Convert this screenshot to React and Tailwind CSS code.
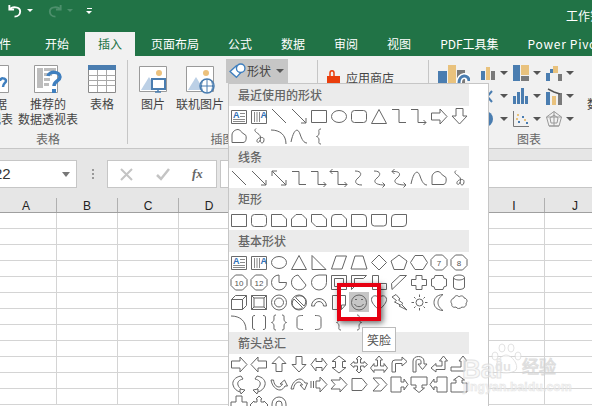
import React from "react";

const cjk = "font-['Noto_Sans_CJK_SC','Noto_Sans',sans-serif]";

// shape gallery, every path is drawn in a 20x20 cell
const P = {
  line: "M3 3L17 17",
  arrow: "M3 3L17 17M17 12V17H12",
  darrow: "M3 3L17 17M3 8V3H8M17 12V17H12",
  elbow: "M3 3.5H10V16.5H17",
  elbowA: "M2 3.5H9V16.5H17M14.5 14L17 16.5L14.5 19",
  elbowD: "M3.5 1L1 3.5L3.5 6M1 3.5H9V16.5H18M15.5 14L18 16.5L15.5 19",
  conn: "M6 3C13 3 13 7 9 10C5 13 6 17 13 17",
  connA: "M5 3C12 3 12 7 8 10C4 13 5 17 16 17M13.5 14.5L16 17L13.5 19.5",
  connD: "M5.5 1L3 3.5L5.5 6M3 3.5C12 3 12 7 8 10C4 13 5 17 17 17M14.5 14.5L17 17L14.5 19.5",
  curve: "M2 16C5 2 9 2 11 8C13 14 15 17 18 17",
  free: "M3 16.5V9C3 6 6 3.5 9 3.5C12 3.5 12 7 15 8L17 9.5C17.5 13 17 16.5 14 16.5Z",
  scribble: "M7 2.5C3 6 11 7 11.5 11C12 15 9 18 8 15.5C7 12 15 9.5 15 13.5C15 18 11.5 18 11 14",
  arc: "M2 4C11 4 17 9 17 18",
  rect: "M2.5 4.5H17.5V16.5H2.5Z",
  ellipse: "M2.5 10.5A7.5 6 0 1 0 17.5 10.5A7.5 6 0 1 0 2.5 10.5Z",
  round: "M5.5 4.5H14.5Q17.5 4.5 17.5 7.5V13.5Q17.5 16.5 14.5 16.5H5.5Q2.5 16.5 2.5 13.5V7.5Q2.5 4.5 5.5 4.5Z",
  tri: "M10 3.5L17.5 17.5H2.5Z",
  rarrow: "M2.5 7H11V3L18 10.5L11 18V14H2.5Z",
  darrowS: "M7 2.5H14V10H18L10.5 18L3 10H7Z",
  lbrace1: "M12 3C9 3 10 5 10 7C10 9 9 10 7.5 10.5C9 11 10 12 10 14C10 16 9 18 12 18",
  snip1: "M2.5 4.5H13L17.5 9V16.5H2.5Z",
  snip2: "M2.5 16.5V9L7 4.5H13L17.5 9V16.5Z",
  snipD: "M2.5 4.5H13L17.5 9V16.5H7L2.5 12Z",
  snipR: "M6 4.5H13L17.5 9V16.5H2.5V8Q2.5 4.5 6 4.5Z",
  round1: "M2.5 4.5H14Q17.5 4.5 17.5 8V16.5H2.5Z",
  round2: "M2.5 4.5H17.5V13Q17.5 16 14.5 16H5.5Q2.5 16 2.5 13Z",
  roundD: "M6 4.5H17.5V13Q17.5 16.5 14 16.5H2.5V8Q2.5 4.5 6 4.5Z",
  rtri: "M3 3.5L17 17.5H3Z",
  para: "M7 4H17.5L13 17H2.5Z",
  trap: "M6 4H14L18 17H2Z",
  diamond: "M10 3L17.5 10.5L10 18L2.5 10.5Z",
  penta: "M10 3L18 9L15 17.5H5L2 9Z",
  hexa: "M6 3.5H14L18.5 10.5L14 17.5H6L1.5 10.5Z",
  octa: "M6.5 3H13.5L18 7.5V13.5L13.5 18H6.5L2 13.5V7.5Z",
  pie: "M10 3A7.5 7.5 0 1 0 17.5 10.5H10Z",
  chord: "M9 3L17 13A7.5 7.5 0 1 1 9 3Z",
  tear: "M17.5 3V10.5A7.5 7.5 0 1 1 10 3Z",
  frame: "M2.5 3.5H17.5V17.5H2.5ZM5.5 6.5H14.5V14.5H5.5Z",
  half: "M2.5 3.5H17.5L14.5 6.5H5.5V14.5L2.5 17.5Z",
  lshape: "M3.5 3.5H9.5V11.5H17.5V17.5H3.5Z",
  stripe: "M2.5 11.5L11 3.5H17.5L3 17.5Z",
  cross: "M7 3.5H13V7.5H17.5V13.5H13V17.5H7V13.5H2.5V7.5H7Z",
  plaque: "M6 3.5H14A3.5 3.5 0 0 0 17.5 7V14A3.5 3.5 0 0 0 14 17.5H6A3.5 3.5 0 0 0 2.5 14V7A3.5 3.5 0 0 0 6 3.5Z",
  can: "M4.5 5.5A5.5 2.5 0 0 1 15.5 5.5V15A5.5 2.5 0 0 1 4.5 15ZM4.5 5.5A5.5 2.5 0 0 0 15.5 5.5",
  cube: "M2.5 7.5H13.5V17.5H2.5ZM2.5 7.5L6.5 3.5H17.5L13.5 7.5M17.5 3.5V13.5L13.5 17.5",
  bevel: "M2.5 3.5H17.5V17.5H2.5ZM5 6H15V15H5ZM2.5 3.5L5 6M17.5 3.5L15 6M2.5 17.5L5 15M17.5 17.5L15 15",
  donut: "M2.5 10.5A7.5 7.5 0 1 0 17.5 10.5A7.5 7.5 0 1 0 2.5 10.5ZM5.5 10.5A4.5 4.5 0 1 0 14.5 10.5A4.5 4.5 0 1 0 5.5 10.5Z",
  noSym: "M2.5 10.5A7.5 7.5 0 1 0 17.5 10.5A7.5 7.5 0 1 0 2.5 10.5ZM6.5 5.5L15 14M5 7L13.5 15.5M5 7A5 5 0 0 0 13.5 15.5M6.5 5.5A5 5 0 0 1 15 14",
  block: "M2.5 14A7.5 7.5 0 0 1 17.5 14H14.5A4.5 4.5 0 0 0 5.5 14Z",
  fold: "M3.5 3.5H16.5V13L12.5 17.5H3.5ZM16.5 13H12.5V17.5",
  smile: "M2.5 10.5A7.5 7.5 0 1 0 17.5 10.5A7.5 7.5 0 1 0 2.5 10.5ZM6 7.5H8M12 7.5H14M5.5 12C7 15.5 13 15.5 14.5 12",
  heart: "M10 18C3 12 2.5 9 2.5 7.5C2.5 3 8.5 2.5 10 6.5C11.5 2.5 17.5 3 17.5 7.5C17.5 9 17 12 10 18Z",
  bolt: "M7 2.5L11 7L9.5 8L14 11.5L12.5 12.5L18 18L10 14L11.5 13L5.5 10L7.5 8.5L3 5Z",
  sun: "M7 10.5A3.5 3.5 0 1 0 14 10.5A3.5 3.5 0 1 0 7 10.5ZM10.5 2.5V5M10.5 16V18.5M2.5 10.5H5M16 10.5H18.5M5 5L6.5 6.5M14.5 14.5L16 16M5 16L6.5 14.5M14.5 6.5L16 5",
  moon: "M14 2.5C7 3 5 7 5 10.5C5 14 7 18 14 18.5C10 15.5 9 13 9 10.5C9 8 10 5.5 14 2.5Z",
  cloud: "M5 6C6 3 9 3 10 5C12 3 15 4 15 6C18 6 19 10 17 11C18 14 15 16 13 15C11 17 8 17 7 15C4 16 2 14 3 12C1 10 2 7 5 6Z",
  dbracket: "M6 3.5C4 3.5 3.5 4 3.5 6V15C3.5 17 4 17.5 6 17.5M14 3.5C16 3.5 16.5 4 16.5 6V15C16.5 17 16 17.5 14 17.5",
  dbrace: "M7 3C4.5 3 5 4 5 7C5 9 4 10 2.5 10.5C4 11 5 12 5 14C5 17 4.5 18 7 18M13 3C15.5 3 15 4 15 7C15 9 16 10 17.5 10.5C16 11 15 12 15 14C15 17 15.5 18 13 18",
  lbracket: "M14 3.5C10 3.5 8 4 8 6.5V14.5C8 17 10 17.5 14 17.5",
  rbracket: "M6 3.5C10 3.5 12 4 12 6.5V14.5C12 17 10 17.5 6 17.5",
  rbrace: "M8 3C11 3 10 5 10 7C10 9 11 10 12.5 10.5C11 11 10 12 10 14C10 16 11 18 8 18",
  larrow: "M17.5 7H9V3L2 10.5L9 18V14H17.5Z",
  uarrow: "M7 17.5V9.5H3L10 2.5L17 9.5H13V17.5Z",
  darrowB: "M7 2.5V10.5H3L10 18L17 10.5H13V2.5Z",
  lr: "M2 10.5L7 4V7.5H13V4L18 10.5L13 17V13.5H7V17Z",
  ud: "M10 2L17 7.5H13.5V13.5H17L10 19L3 13.5H6.5V7.5H3Z",
  quad: "M10 2L13 5H11.5V9H15V7.5L18.5 10.5L15 13.5V12H11.5V16H13L10 19L7 16H8.5V12H5V13.5L1.5 10.5L5 7.5V9H8.5V5H7Z",
  lru: "M10 2L13.5 6H11.5V12H15V9.5L18.5 14L15 18.5V16H5V18.5L1.5 14L5 9.5V12H8.5V6H6.5Z",
  bent: "M3 18V9Q3 6 6 6H13V3L18 7.5L13 12V9.5H6.5V18Z",
  uturn: "M4 18V7C4 1 15 1 15 7V10H18L13.5 15.5L9 10H12V7C12 5 7 5 7 7V18Z",
  leftup: "M2 14L7 9.5V12H13V7H10.5L14.5 2L18.5 7H16V15.5H7V18Z",
  bentup: "M2 13H12V7H10L14 2L18 7H16V17H2Z",
  curveR: "M12 2C6 3 3 7 4 11C5 15 8 17 11 18V15L16 16L12 20L11.5 18M12 2L14 5C10 6 8 8 9 11C9.5 13 11 14 12 15",
  curveL: "M8 2C14 3 17 7 16 11C15 15 12 17 9 18V15L4 16L8 20L8.5 18M8 2L6 5C10 6 12 8 11 11C10.5 13 9 14 8 15",
  curveU: "M2 6C3 12 7 16 11 16C13 16 15 14 16 12H18.5L15.5 6L11 10H13.5C12.5 12 11 13 10 13C7 13 5 10 4.5 6Z",
  curveD: "M2 15C3 9 7 5 11 5C13 5 15 7 16 9H18.5L15.5 16L11 11H13.5C12.5 9 11 8 10 8C7 8 5 11 4.5 15Z",
  striped: "M2 7V14M4.5 7V14M7 7H11V3L18 10.5L11 18V14H7Z",
  notched: "M2 6H11V3L18 10.5L11 18V15H2L6 10.5Z",
  home: "M3 4.5H13L18 10.5L13 16.5H3Z",
  chevron: "M4 4H12L18 10.5L12 17H4L10 10.5Z",
  rcall: "M2 3H12V8H15V5L19 10.5L15 16V13H12V18H2Z",
  dcall: "M2 3H18V11H13V14H15.5L10 18.5L4.5 14H7V11H2Z",
  lcall: "M18 3H8V8H5V5L1 10.5L5 16V13H8V18H18Z",
  ucall: "M2 18V9H7V6H4.5L10 2L15.5 6H13V9H18V18Z",
  lrcall: "M7 2H13V8H18V18H2V8H7Z",
  qcall: "M10 2L13 5H12V8H15V7L19 11L15 15V14H5V15L1 11L5 7V8H8V5H7Z",
  circ: "M3 18V10A7 7 0 0 1 17 10V18H13V10A3 3 0 0 0 7 10V18Z",
};

const TextBox = ({ vertical }) => (
  <svg width="20" height="20" viewBox="0 0 20 20" fill="none">
    <path d="M2.5 4.5H17.5V17.5H2.5Z" stroke="#6b6b6b" />
    {vertical ? (
      <path d="M5.5 6V16M8 6V16M10.5 6V16" stroke="#8a8a8a" />
    ) : (
      <path d="M11 7.5H16M11 10.5H16M4 13.5H16M4 15.5H16" stroke="#8a8a8a" />
    )}
    <text x={vertical ? 11.5 : 4} y="12" fontSize="9" fontWeight="700" fill="#2f6fb5" fontFamily="Liberation Sans">A</text>
  </svg>
);

const Shape = ({ d, label }) => {
  if (d === "text") return <TextBox />;
  if (d === "vtext") return <TextBox vertical />;
  return (
    <svg width="20" height="20" viewBox="0 0 20 20" fill="none" stroke="#666666" strokeWidth="1">
      <path d={P[d]} />
      {label && (
        <text x="10" y="13.5" textAnchor="middle" fontSize="8" stroke="none" fill="#555" fontFamily="Liberation Sans">{label}</text>
      )}
    </svg>
  );
};

const sections = [
  { title: "最近使用的形状", items: ["text", "vtext", "line", "arrow", "rect", "ellipse", "round", "tri", "elbow", "elbowA", "rarrow", "darrowS", "free", "scribble", "arc", "curve", "lbrace1"] },
  { title: "线条", items: ["line", "arrow", "darrow", "elbow", "elbowA", "elbowD", "conn", "connA", "connD", "curve", "free", "scribble"] },
  { title: "矩形", items: ["rect", "round", "snip1", "snip2", "snipD", "snipR", "round1", "round2", "roundD"] },
  { title: "基本形状", items: ["text", "vtext", "ellipse", "tri", "rtri", "para", "trap", "diamond", "penta", "hexa", "octa:7", "octa:8", "octa:10", "octa:12", "pie", "chord", "tear", "frame", "half", "lshape", "stripe", "cross", "plaque", "can", "cube", "bevel", "donut", "noSym", "block", "fold", "smile", "heart", "bolt", "sun", "moon", "cloud", "arc", "dbracket", "dbrace", "lbracket", "rbracket", "lbrace1", "rbrace"] },
  { title: "箭头总汇", items: ["rarrow", "larrow", "uarrow", "darrowB", "lr", "ud", "quad", "lru", "bent", "uturn", "leftup", "bentup", "curveR", "curveL", "curveU", "curveD", "striped", "notched", "home", "chevron", "rcall", "dcall", "lcall", "ucall", "lrcall", "qcall", "circ"] },
];

const tabs = ["开始", "插入", "页面布局", "公式", "数据", "审阅", "视图", "PDF工具集", "Power Pivot"];
const columns = ["A", "B", "C", "D", "E", "F", "G", "H", "I", "J"];
const rows = Array.from({ length: 12 });

const Caret = () => <span className="h-0 w-0 shrink-0 border-x-[4px] border-t-[4px] border-x-transparent border-t-[#555]" />;

const Pic = ({ children }) => (
  <svg width="30" height="30" viewBox="0 0 30 30" fill="none">
    <path d="M1.5 2.5H28.5V27.5H1.5Z" fill="#fff" stroke="#9a9a9a" />
    <circle cx="21" cy="9" r="3" fill="#ecc17c" />
    <path d="M3 26L11 13L19 26Z" fill="#bcd0e6" />
    {children}
  </svg>
);

const BigButton = ({ icon, lines, className }) => (
  <div className={`flex shrink-0 flex-col items-center pt-[7px] ${className}`}>
    <div className="flex h-[32px] items-center">{icon}</div>
    <div className="mt-[1px] text-center text-[12px] leading-[15px] whitespace-nowrap text-[#444]">
      {lines.map((l) => <div key={l}>{l}</div>)}
    </div>
  </div>
);

const GroupLabel = ({ children }) => (
  <div className="absolute inset-x-0 bottom-[1px] text-center text-[12px] leading-[16px] text-[#666]">{children}</div>
);

const B = "#4a7db0", Y = "#e9c27d", G = "#7a7a7a";
const chartIcons = [
  <svg key="a" width="16" height="16"><path d="M1 6h4v9H1z" fill={B} /><path d="M6 2h4v13H6z" fill={Y} /><path d="M11 6h4v9h-4z" fill={G} /></svg>,
  <svg key="b" width="16" height="16"><path d="M0 0h7v16H0z" fill={B} /><path d="M8 0h8v10H8z" fill={Y} /><path d="M8 11h8v5H8z" fill={G} /></svg>,
  <svg key="c" width="16" height="16"><path d="M0 8h4v8H0zM4 4h3v4H4z" fill={B} /><path d="M7 1h5v7H7z" fill={Y} /><path d="M12 9h4v7h-4z" fill={G} /></svg>,
  <svg key="d" width="16" height="16"><path d="M2 3l5 6 5-6M2 14l5-6 5 6" stroke={B} strokeWidth="2" fill="none" /></svg>,
  <svg key="e" width="16" height="16"><path d="M0 8h3v8H0zM4 4h3v12H4zM8 0h3v16H8zM12 8h3v8h-3z" fill={B} /></svg>,
  <svg key="f" width="16" height="18"><path d="M0 5h4v13H0z" fill={B} /><path d="M6 9h4v9H6z" fill={Y} /><path d="M12 6h4v12h-4z" fill={G} /><path d="M2 2l6 3 6 2" stroke="#555" strokeWidth="1.5" fill="none" /></svg>,
  <svg key="g" width="16" height="16"><circle cx="5" cy="8" r="8" fill={B} /></svg>,
  <svg key="h" width="16" height="16"><path d="M.5 0v15.5H16" stroke="#777" fill="none" /><path d="M4 3h2v2H4zM11 8h2v2h-2z" fill={Y} /><path d="M5 10h2v2H5zM9 5h2v2H9zM13 11h2v2h-2z" fill={B} /><path d="M3 7h2v2H3z" fill={Y} /></svg>,
  <svg key="i" width="16" height="16" fill="none" stroke="#999"><path d="M8 .5L15.5 6 13 15H3L.5 6Z" /><path d="M8 4L12 7 11 12H5L4 7Z" /><path d="M8 .5V15M.5 6L15.5 6M3 15L13 15" /></svg>,
];

const App = () => {
  return (
    <div className={`relative h-[406px] w-[592px] overflow-hidden bg-white ${cjk}`}>
      {/* title bar */}
      <div className="flex h-[32px] items-center overflow-hidden bg-[#217346] pl-[7px] text-white">
        <div className="flex h-[21px] shrink-0 items-center self-start">
          <svg className="shrink-0" width="16" height="16" viewBox="0 0 17 17" fill="none" stroke="#fff" strokeWidth="2">
            <path d="M2.5 2V7H7.5" />
            <path d="M3 7C5 3.5 14 3.5 14 9C14 12 11.5 14.5 8 14.5" />
          </svg>
          <span className="ml-[4px] h-0 w-0 border-x-[3px] border-t-[3px] border-x-transparent border-t-white" />
          <svg className="ml-[14px] shrink-0" width="16" height="16" viewBox="0 0 17 17" fill="none" stroke="#4d8f6c" strokeWidth="2">
            <path d="M14.5 2V7H9.5" />
            <path d="M14 7C12 3.5 3 3.5 3 9C3 12 5.5 14.5 9 14.5" />
          </svg>
          <span className="ml-[4px] h-0 w-0 border-x-[3px] border-t-[3px] border-x-transparent border-t-[#4d8f6c]" />
          <div className="ml-[13px] flex flex-col items-center gap-[2px]">
            <span className="h-[1px] w-[5px] bg-white" />
            <span className="h-0 w-0 border-x-[3px] border-t-[3px] border-x-transparent border-t-white" />
          </div>
        </div>
        <span className="ml-[474px] shrink-0 text-[12px] whitespace-nowrap">工作簿1 - Excel</span>
      </div>

      {/* tabs */}
      <div className="flex h-[24px] items-stretch overflow-hidden bg-[#217346] text-[12px] leading-[24px] whitespace-nowrap text-white">
        <div className="ml-[-13px] pr-[19.5px]">文件</div>
        {tabs.map((t) => (
          <div
            key={t}
            className={
              t === "插入"
                ? "mx-[1.5px] bg-[#f1f1f1] px-[13px] text-[#217346]"
                : t === "Power Pivot"
                  ? "px-[14.5px] tracking-[0.7px]"
                  : "px-[14.5px]"
            }
          >
            {t}
          </div>
        ))}
      </div>

      {/* ribbon */}
      <div className="flex h-[93px] overflow-hidden border-b border-[#c6c6c6] bg-[#f1f1f1]">
        <div className="relative ml-[-31px] flex w-[158px] shrink-0 pl-[8px]">
          <BigButton className="w-[36px]" lines={["数据", "透视表"]} icon={
            <svg width="28" height="28" fill="none"><path d="M.5.5h27v27H.5z" fill="#fff" stroke="#9a9a9a" /><path d="M19 16c0-4 6-3 6 0 0 2-3 2-3 6" stroke="#3f7fbf" strokeWidth="2.5" /></svg>
          } />
          <BigButton className="ml-[5px] w-[60px]" lines={["推荐的", "数据透视表"]} icon={
            <svg width="30" height="30" fill="none">
              <path d="M1.5 1.5H24.5V28.5H1.5Z" fill="#fff" stroke="#9a9a9a" />
              <path d="M4 4h6v20H4zM11 4h12v3H11zM11 9h8v3h-8zM11 14h6v3h-6zM11 19h5v3h-5z" fill="#bdbdbd" />
              <path d="M15 12c1-5 12-5 12 1 0 4-6 4-6 9" stroke="#3f7fbf" strokeWidth="3.5" />
              <path d="M19 25h4v4h-4z" fill="#3f7fbf" />
            </svg>
          } />
          <BigButton className="ml-[10px] w-[28px]" lines={["表格"]} icon={
            <svg width="28" height="28" fill="none">
              <path d="M.5 .5h27v27H.5z" fill="#fff" stroke="#8a8a8a" />
              <path d="M0 0h28v5H0z" fill="#4a7db0" />
              <path d="M.5 10.5h27M.5 15.5h27M.5 20.5h27M9.5 5v22M18.5 5v22" stroke="#a8a8a8" />
            </svg>
          } />
          <GroupLabel>表格</GroupLabel>
        </div>
        <div className="relative my-[4px] w-[190px] shrink-0 border-l border-[#c6c6c6]">
          <div className="mt-[-4px] flex pl-[4px]">
            <BigButton className="w-[42px]" lines={["图片"]} icon={
              <Pic><path d="M14 15h13v10H14z" fill="#fff" stroke="#4a7db0" strokeWidth="2" /><path d="M20 25v3M17 28h6" stroke="#4a7db0" strokeWidth="1.5" /></Pic>
            } />
            <BigButton className="ml-[2px] w-[48px]" lines={["联机图片"]} icon={
              <Pic><circle cx="22" cy="22" r="7" fill="#fff" stroke="#4a7db0" strokeWidth="1.5" /><path d="M15 22h14M22 15v14M18 16c-2 4-2 8 0 12M26 16c2 4 2 8 0 12" stroke="#4a7db0" /></Pic>
            } />
            <div className="mt-[3px] ml-[2px] flex h-[24px] w-[62px] shrink-0 items-center bg-[#c6c6c6] pl-[3px]">
              <svg className="shrink-0" width="17" height="17" viewBox="0 0 16 16" fill="none">
                <path d="M1 8L7 2.5L12 8L7 13.5Z" fill="#fff" stroke="#3f7fbf" strokeWidth="1.3" />
                <circle cx="11" cy="5" r="4" fill="#fff" stroke="#3f7fbf" strokeWidth="1.3" />
              </svg>
              <span className="ml-[1px] text-[12px] text-[#444]">形状</span>
              <span className="ml-[5px] flex"><Caret /></span>
            </div>
          </div>
          <div className="absolute inset-x-0 bottom-[-3px] text-center text-[12px] leading-[16px] text-[#666]">插图</div>
        </div>
        <div className="relative my-[4px] w-[111px] shrink-0 border-l border-[#c6c6c6]">
          <div className="flex items-center pt-[9px] pl-[8px]">
            <svg width="15" height="16" viewBox="0 0 15 16">
              <path d="M1 6H14V16H1Z" fill="#ea3e0c" />
              <path d="M4 6V3C4 0 8 0 8 3V6" stroke="#ea3e0c" strokeWidth="1.5" fill="none" />
            </svg>
            <span className="ml-[5px] text-[12px] text-[#444]">应用商店</span>
          </div>
        </div>
        <div className="relative my-[4px] w-[200px] shrink-0 border-l border-[#c6c6c6]">
          <div className="mt-[-4px] flex">
            <svg className="mt-[8px] ml-[9px] shrink-0" width="32" height="32" viewBox="0 0 32 32">
              <path d="M0 7h9v25H0z" fill={B} /><path d="M10 1h8v31h-8z" fill={Y} /><path d="M19 6h8v26h-8z" fill={G} />
              <path d="M21 19C21 10 31 10 31 17" fill="none" stroke="#fff" strokeWidth="6" />
              <path d="M21 19C21 10 31 10 31 17" fill="none" stroke={B} strokeWidth="3" />
            </svg>
            <div className="mt-[5px] ml-[10px] grid shrink-0 auto-rows-[23px] grid-cols-[33px_33px_33px]">
              {chartIcons.map((c) => (
                <div key={c.key} className="flex items-center">
                  <span className="flex w-[20px] justify-start">{c}</span>
                  <Caret />
                </div>
              ))}
            </div>
            <div className="mt-[39px] ml-[8px] text-[12px] whitespace-nowrap text-[#444]">数据透视图</div>
          </div>
          <div className="absolute bottom-[-3px] left-[86px] w-[28px] text-center text-[12px] leading-[16px] whitespace-nowrap text-[#666]">图表</div>
        </div>
      </div>

      {/* formula bar */}
      <div className="flex h-[49px] items-start bg-[#e6e6e6] pt-[11px]">
        <div className="flex h-[28px] w-[77px] shrink-0 items-center justify-between border border-l-0 border-[#c6c6c6] bg-white pr-[6px] font-['Liberation_Sans',sans-serif] text-[15px] text-[#333]">
          <span className="ml-[-6px]">22</span>
          <span className="h-0 w-0 border-x-[4px] border-t-[5px] border-x-transparent border-t-[#777]" />
        </div>
        <div className="ml-[14px] flex h-[28px] w-[3px] shrink-0 flex-col items-center justify-center gap-[2px]">
          <span className="h-[2px] w-[2px] bg-[#999]" />
          <span className="h-[2px] w-[2px] bg-[#999]" />
          <span className="h-[2px] w-[2px] bg-[#999]" />
        </div>
        <div className="ml-[13px] flex h-[28px] w-[110px] shrink-0 items-center border border-[#c6c6c6] bg-white pl-[12px]">
          <svg width="13" height="13" fill="none" stroke="#c4c4c4" strokeWidth="2"><path d="M1 1l11 11M12 1L1 12" /></svg>
          <svg className="ml-[23px]" width="14" height="13" fill="none" stroke="#c4c4c4" strokeWidth="2.5"><path d="M1 7l4 4 8-10" /></svg>
          <span className="ml-[22px] font-['Liberation_Serif',serif] text-[13px] font-bold text-[#666] italic">fx</span>
        </div>
        <div className="ml-[3px] h-[28px] flex-1 border border-r-0 border-[#c6c6c6] bg-white" />
      </div>

      {/* sheet */}
      <div className="ml-[-4px] flex h-[15px] w-[620px] border-b border-[#9f9f9f] bg-[#e6e6e6] font-['Liberation_Sans',sans-serif] text-[12px] leading-[16px] text-[#222]">
        {columns.map((c) => (
          <div key={c} className="w-[61px] shrink-0 border-r border-[#b0b0b0] text-center">{c}</div>
        ))}
      </div>
      <div className="ml-[-4px] w-[620px]">
        {rows.map((_, i) => (
          <div key={i} className="flex h-[16px] border-b border-[#d4d4d4]">
            {columns.map((c) => <div key={c} className="w-[61px] shrink-0 border-r border-[#d4d4d4]" />)}
          </div>
        ))}
      </div>

      {/* shapes menu */}
      <div className="absolute top-[83px] left-[228px] w-[261px] border border-[#c6c6c6] bg-white">
        {sections.map((s) => (
          <div key={s.title}>
            <div className="h-[22px] w-[240px] bg-[#ebebeb] pl-[9px] text-[12px] leading-[22px] font-medium text-[#666]">{s.title}</div>
            <div className="flex w-[240px] flex-wrap">
              {s.items.map((it, i) => {
                const [d, label] = it.split(":");
                return (
                  <div key={i} className={d === "smile" ? "h-[20px] w-[20px] bg-[#c6c6c6]" : "h-[20px] w-[20px]"}>
                    <Shape d={d} label={label} />
                  </div>
                );
              })}
            </div>
          </div>
        ))}
        <div className="pointer-events-none absolute top-[199px] left-[108px] h-[38px] w-[44px] border-[4px] border-[#e60012] shadow-[2px_2px_6px_rgba(0,0,0,0.6)]" />
        <div className="absolute top-[243px] left-[133px] h-[25px] w-[34px] border border-[#bbbbbb] bg-white text-center text-[12px] leading-[23px] text-[#555]">笑脸</div>
      </div>

      {/* baidu watermark */}
      <div className="pointer-events-none absolute top-[343px] left-[462px] h-[52px] w-[100px] font-['Liberation_Sans',sans-serif] opacity-70">
        <svg className="absolute top-0 left-[28px]" width="32" height="32" viewBox="0 0 32 32" fill="#fff" stroke="#d8d8d8">
          <ellipse cx="5" cy="13" rx="3" ry="4" />
          <ellipse cx="12" cy="5" rx="3" ry="4" />
          <ellipse cx="21" cy="5" rx="3" ry="4" />
          <ellipse cx="28" cy="13" rx="3" ry="4" />
          <path d="M16 12C10 12 4 22 7 27C10 31 22 31 26 27C29 22 22 12 16 12Z" />
        </svg>
        <span className="absolute top-[13px] left-0 text-[26px] leading-[26px] font-bold text-[#f6f6f6] [-webkit-text-stroke:1px_#d8d8d8]">Bai</span>
        <span className="absolute top-[17px] left-[33px] text-[13px] leading-[14px] font-bold text-[#d8d8d8]">du</span>
        <span className={`absolute top-[14px] left-[60px] text-[17px] leading-[18px] text-[#f6f6f6] [-webkit-text-stroke:1px_#d0d0d0] ${cjk}`}>经验</span>
        <span className="absolute top-[38px] left-[1px] text-[12px] leading-[12px] font-bold tracking-[0.2px] text-[#f2f2f2] [-webkit-text-stroke:0.5px_#d8d8d8]">jingyan.baidu.com</span>
      </div>
    </div>
  );
};

export default App;
